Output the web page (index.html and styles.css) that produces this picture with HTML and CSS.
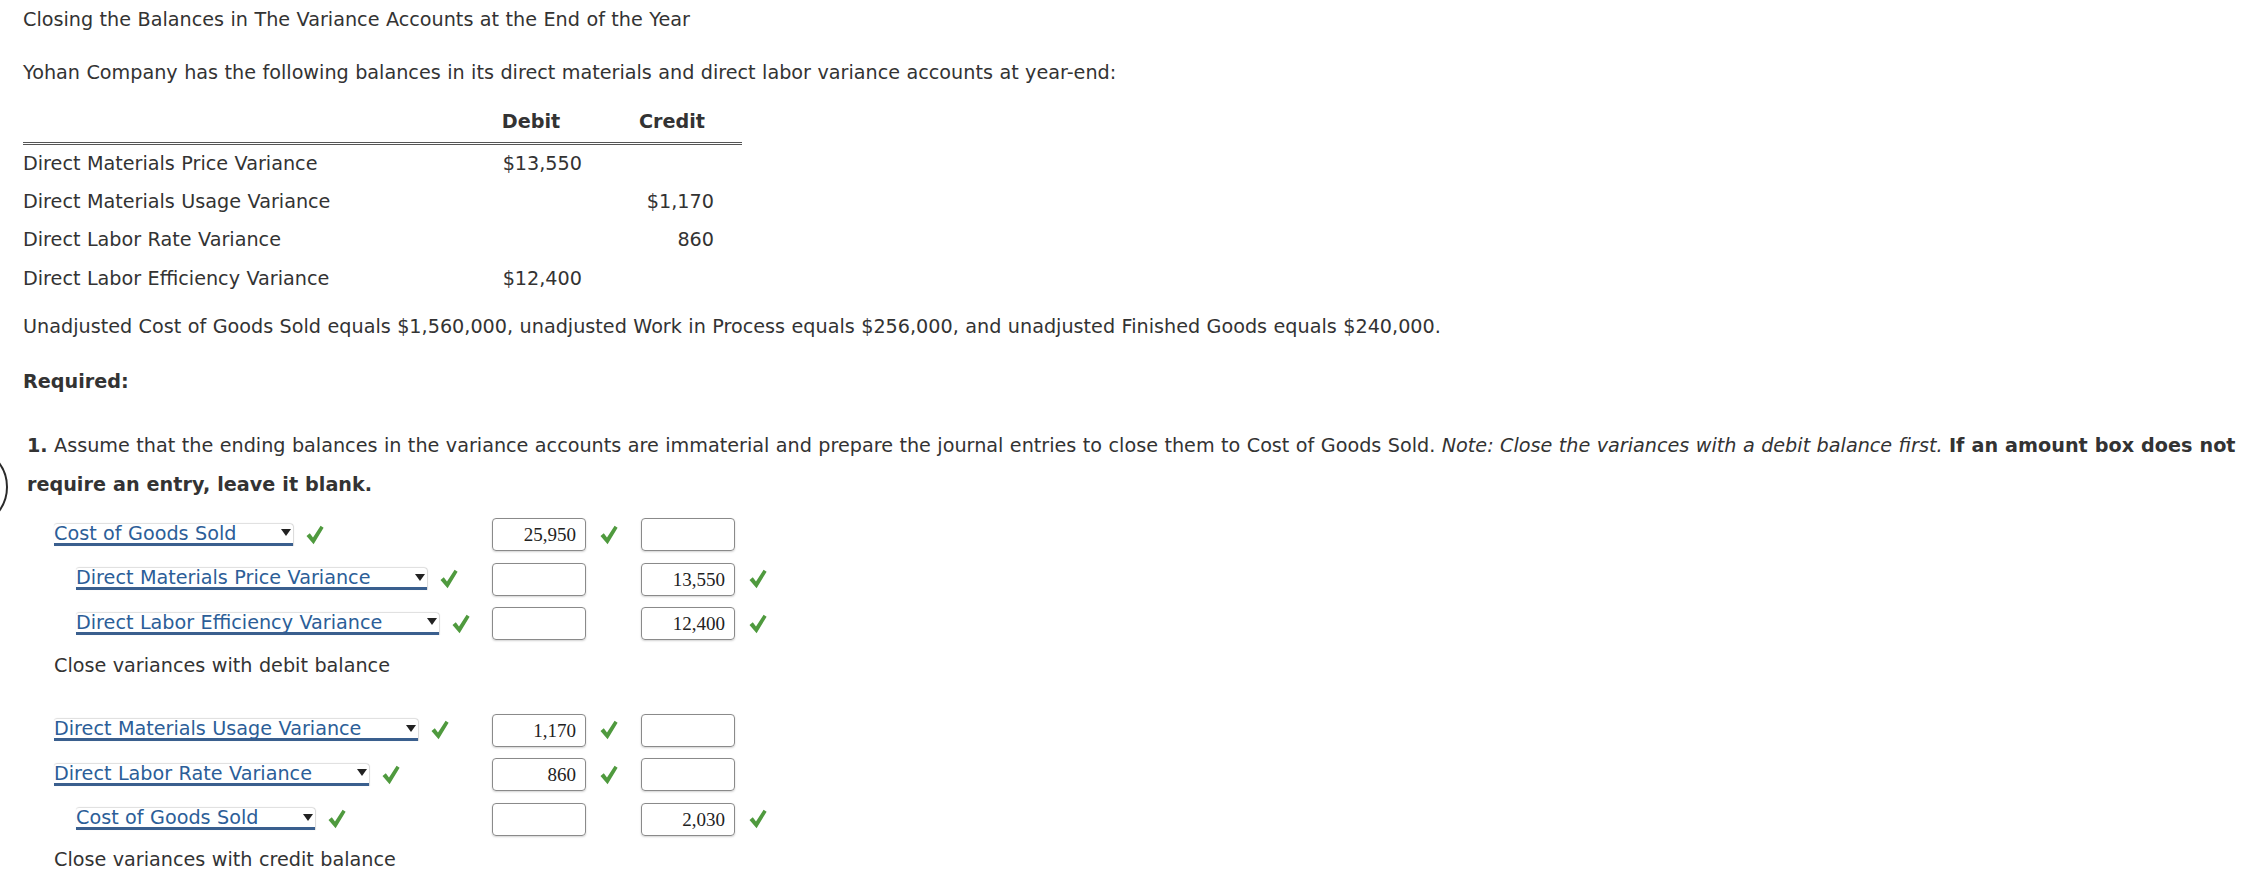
FILE: index.html
```html
<!DOCTYPE html>
<html>
<head>
<meta charset="utf-8">
<title>Closing the Balances</title>
<link rel="stylesheet" href="styles.css">
</head>
<body>
<div class="edge-circle"></div>
<div class="page">
  <p class="title">Closing the Balances in The Variance Accounts at the End of the Year</p>
  <p class="intro">Yohan Company has the following balances in its direct materials and direct labor variance accounts at year-end:</p>

  <div class="balances">
    <div class="bal-head"><span></span><span class="hd">Debit</span><span class="hd">Credit</span></div>
    <div class="bal-row"><span>Direct Materials Price Variance</span><span class="dr">$13,550</span><span class="cr"></span></div>
    <div class="bal-row"><span>Direct Materials Usage Variance</span><span class="dr"></span><span class="cr">$1,170</span></div>
    <div class="bal-row"><span>Direct Labor Rate Variance</span><span class="dr"></span><span class="cr">860</span></div>
    <div class="bal-row"><span>Direct Labor Efficiency Variance</span><span class="dr">$12,400</span><span class="cr"></span></div>
  </div>

  <p class="unadj">Unadjusted Cost of Goods Sold equals $1,560,000, unadjusted Work in Process equals $256,000, and unadjusted Finished Goods equals $240,000.</p>

  <p class="required">Required:</p>

  <p class="question"><b>1.</b> Assume that the ending balances in the variance accounts are immaterial and prepare the journal entries to close them to Cost of Goods Sold. <i>Note: Close the variances with a debit balance first.</i> <b>If an amount box does not require an entry, leave it blank.</b></p>

  <div class="journal">
    <div class="entry">
      <div class="acct"><span class="select"><span class="sel-text">Cost of Goods Sold</span><span class="arrow"></span></span><svg class="check" viewBox="0 0 18 20"><path d="M0.5 11 L3.8 8.3 L7 12.4 L14.6 0.8 L17.6 2.8 L7.6 19.2 Z"/></svg></div>
      <span class="amt">25,950</span>
      <span class="mark"><svg class="check" viewBox="0 0 18 20"><path d="M0.5 11 L3.8 8.3 L7 12.4 L14.6 0.8 L17.6 2.8 L7.6 19.2 Z"/></svg></span>
      <span class="amt"></span>
      <span class="mark"></span>
    </div>
    <div class="entry">
      <div class="acct indent"><span class="select"><span class="sel-text">Direct Materials Price Variance</span><span class="arrow"></span></span><svg class="check" viewBox="0 0 18 20"><path d="M0.5 11 L3.8 8.3 L7 12.4 L14.6 0.8 L17.6 2.8 L7.6 19.2 Z"/></svg></div>
      <span class="amt"></span>
      <span class="mark"></span>
      <span class="amt">13,550</span>
      <span class="mark"><svg class="check" viewBox="0 0 18 20"><path d="M0.5 11 L3.8 8.3 L7 12.4 L14.6 0.8 L17.6 2.8 L7.6 19.2 Z"/></svg></span>
    </div>
    <div class="entry">
      <div class="acct indent"><span class="select"><span class="sel-text">Direct Labor Efficiency Variance</span><span class="arrow"></span></span><svg class="check" viewBox="0 0 18 20"><path d="M0.5 11 L3.8 8.3 L7 12.4 L14.6 0.8 L17.6 2.8 L7.6 19.2 Z"/></svg></div>
      <span class="amt"></span>
      <span class="mark"></span>
      <span class="amt">12,400</span>
      <span class="mark"><svg class="check" viewBox="0 0 18 20"><path d="M0.5 11 L3.8 8.3 L7 12.4 L14.6 0.8 L17.6 2.8 L7.6 19.2 Z"/></svg></span>
    </div>
    <p class="caption">Close variances with debit balance</p>

    <div class="entry gap-top">
      <div class="acct"><span class="select"><span class="sel-text">Direct Materials Usage Variance</span><span class="arrow"></span></span><svg class="check" viewBox="0 0 18 20"><path d="M0.5 11 L3.8 8.3 L7 12.4 L14.6 0.8 L17.6 2.8 L7.6 19.2 Z"/></svg></div>
      <span class="amt">1,170</span>
      <span class="mark"><svg class="check" viewBox="0 0 18 20"><path d="M0.5 11 L3.8 8.3 L7 12.4 L14.6 0.8 L17.6 2.8 L7.6 19.2 Z"/></svg></span>
      <span class="amt"></span>
      <span class="mark"></span>
    </div>
    <div class="entry">
      <div class="acct"><span class="select"><span class="sel-text">Direct Labor Rate Variance</span><span class="arrow"></span></span><svg class="check" viewBox="0 0 18 20"><path d="M0.5 11 L3.8 8.3 L7 12.4 L14.6 0.8 L17.6 2.8 L7.6 19.2 Z"/></svg></div>
      <span class="amt">860</span>
      <span class="mark"><svg class="check" viewBox="0 0 18 20"><path d="M0.5 11 L3.8 8.3 L7 12.4 L14.6 0.8 L17.6 2.8 L7.6 19.2 Z"/></svg></span>
      <span class="amt"></span>
      <span class="mark"></span>
    </div>
    <div class="entry">
      <div class="acct indent"><span class="select"><span class="sel-text">Cost of Goods Sold</span><span class="arrow"></span></span><svg class="check" viewBox="0 0 18 20"><path d="M0.5 11 L3.8 8.3 L7 12.4 L14.6 0.8 L17.6 2.8 L7.6 19.2 Z"/></svg></div>
      <span class="amt"></span>
      <span class="mark"></span>
      <span class="amt">2,030</span>
      <span class="mark"><svg class="check" viewBox="0 0 18 20"><path d="M0.5 11 L3.8 8.3 L7 12.4 L14.6 0.8 L17.6 2.8 L7.6 19.2 Z"/></svg></span>
    </div>
    <p class="caption last">Close variances with credit balance</p>
  </div>
</div>
</body>
</html>
```

FILE: styles.css
```css
html, body {
  margin: 0;
  padding: 0;
  background: #ffffff;
}

body {
  font-family: "DejaVu Sans", Verdana, sans-serif;
  font-size: 19.2px;
  word-spacing: 0.35px;
  color: #333333;
  overflow: hidden;
}

.page {
  padding: 6px 0 0 23px;
}

p {
  margin: 0;
  line-height: 27px;
}

.intro {
  margin-top: 25.5px;
}

/* balances table */
.balances {
  margin-top: 22px;
  width: 719px;
}

.bal-head,
.bal-row {
  display: grid;
  grid-template-columns: 437px 142px 140px;
}

.bal-head {
  line-height: 27px;
  padding-bottom: 7px;
  border-bottom: 3px double #555555;
}

.hd {
  font-weight: bold;
  text-align: center;
}

.bal-row {
  line-height: 38.4px;
}

.dr {
  text-align: right;
  padding-right: 20px;
}

.cr {
  text-align: right;
  padding-right: 28px;
}

.unadj {
  margin-top: 14.5px;
}

.required {
  margin-top: 28px;
  font-weight: bold;
}

.question {
  margin-top: 31px;
  margin-left: 4px;
  line-height: 39px;
  padding-right: 8px;
}

/* journal entries */
.journal {
  margin-left: 31px;
  margin-top: 9px;
}

.entry {
  display: flex;
  align-items: center;
  height: 44.5px;
}

.entry.gap-top {
  margin-top: 29.5px;
}

.acct {
  width: 438px;
  display: flex;
  align-items: center;
}

.acct.indent {
  padding-left: 22px;
  width: 416px;
}

.select {
  display: inline-flex;
  align-items: center;
  height: 19px;
  padding-right: 2px;
  background: #ffffff;
  border-radius: 3px 3px 0 0;
  box-shadow: 0 -1px 1px rgba(0, 0, 0, 0.12), 1px 0 1px rgba(0, 0, 0, 0.14);
  border-bottom: 3px solid #3a5f8e;
  color: #2c5e98;
  line-height: 19px;
}

.sel-text {
  white-space: nowrap;
}

.arrow {
  width: 0;
  height: 0;
  margin-left: 45px;
  border-left: 5px solid transparent;
  border-right: 5px solid transparent;
  border-top: 7px solid #222222;
  margin-top: -1px;
}

.check {
  width: 18px;
  height: 20px;
  fill: #4f9a3e;
  flex: none;
}

.acct .check {
  margin-left: 13px;
}

.amt {
  box-sizing: border-box;
  width: 94px;
  height: 33px;
  border: 1px solid #8a8a8a;
  border-radius: 4px;
  box-shadow: 0 1px 2px rgba(0, 0, 0, 0.18);
  font-family: "Liberation Serif", "Times New Roman", serif;
  font-size: 19px;
  word-spacing: 0;
  color: #222222;
  text-align: right;
  padding-right: 9px;
  line-height: 31px;
  flex: none;
}

.mark {
  width: 55px;
  display: flex;
  align-items: center;
  padding-left: 14px;
  box-sizing: border-box;
  flex: none;
}

.caption {
  line-height: 27px;
  margin-top: 5.5px;
}

.caption.last {
  margin-top: 4px;
}

/* partially visible round control at the left edge */
.edge-circle {
  position: absolute;
  left: -74px;
  top: 446px;
  width: 78px;
  height: 78px;
  border: 2.5px solid #2a2a2a;
  border-radius: 50%;
}
```
